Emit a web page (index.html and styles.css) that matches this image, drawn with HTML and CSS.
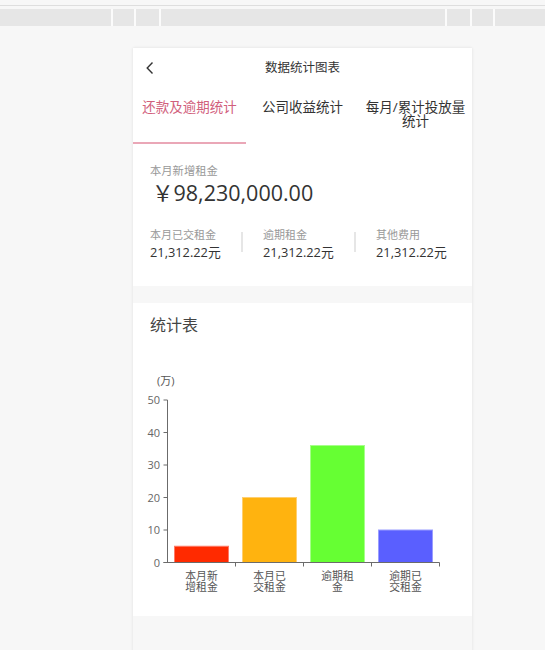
FILE: index.html
```html
<!DOCTYPE html>
<html lang="zh-CN">
<head>
<meta charset="utf-8">
<title>数据统计图表</title>
<link rel="stylesheet" href="styles.css">
</head>
<body>
<div class="topline"></div>
<div class="toolbar">
  <div class="seg s1"></div><div class="seg s2"></div><div class="seg s3"></div><div class="seg s4"></div><div class="seg s5"></div><div class="seg s6"></div><div class="seg s7"></div>
</div>
<div class="card">
  <div class="header">
    <svg class="back" width="10" height="14" viewBox="0 0 10 14"><path d="M7.5 1.5 L2.2 7 L7.5 12.5" fill="none" stroke="#333" stroke-width="1.4"/></svg>
    <div class="title">数据统计图表</div>
  </div>
  <div class="tabs">
    <div class="tab active">还款及逾期统计</div>
    <div class="tab">公司收益统计</div>
    <div class="tab">每月/累计投放量统计</div>
  </div>
  <div class="summary">
    <div class="label">本月新增租金</div>
    <div class="amount">￥98,230,000.00</div>
    <div class="stats">
      <div class="stat"><div class="label">本月已交租金</div><div class="value">21,312.22元</div></div>
      <div class="sep"></div>
      <div class="stat"><div class="label">逾期租金</div><div class="value">21,312.22元</div></div>
      <div class="sep"></div>
      <div class="stat"><div class="label">其他费用</div><div class="value">21,312.22元</div></div>
    </div>
  </div>
  <div class="gap"></div>
  <div class="chart-title">统计表</div>
  <svg class="chart" width="339" height="230" viewBox="0 0 339 230">
    <text class="unit" x="24" y="45">(万)</text>
    <g class="ylab">
      <text x="27" y="64">50</text>
      <text x="27" y="96.5">40</text>
      <text x="27" y="129">30</text>
      <text x="27" y="161.5">20</text>
      <text x="27" y="194">10</text>
      <text x="27" y="226.5">0</text>
    </g>
    <g stroke="#6b6b6b" stroke-width="1">
      <line x1="34.5" y1="60" x2="34.5" y2="222.5"/>
      <line x1="30.5" y1="60" x2="34.5" y2="60"/>
      <line x1="30.5" y1="92.5" x2="34.5" y2="92.5"/>
      <line x1="30.5" y1="125" x2="34.5" y2="125"/>
      <line x1="30.5" y1="157.5" x2="34.5" y2="157.5"/>
      <line x1="30.5" y1="190" x2="34.5" y2="190"/>
      <line x1="30.5" y1="222.5" x2="34.5" y2="222.5"/>
    </g>
    <rect x="41.5" y="206.25" width="54" height="16.25" fill="#ff2a00" stroke="#ff7a66" stroke-width="1"/>
    <rect x="109.5" y="157.5" width="54" height="65" fill="#ffb30f" stroke="#ffcf70" stroke-width="1"/>
    <rect x="177.5" y="105.5" width="54" height="117" fill="#66ff33" stroke="#a6ff8a" stroke-width="1"/>
    <rect x="245.5" y="190" width="54" height="32.5" fill="#5a5fff" stroke="#9a9dff" stroke-width="1"/>
    <g stroke="#6b6b6b" stroke-width="1">
      <line x1="30.5" y1="222.5" x2="306.5" y2="222.5"/>
      <line x1="102.5" y1="222.5" x2="102.5" y2="226.5"/>
      <line x1="170.5" y1="222.5" x2="170.5" y2="226.5"/>
      <line x1="238.5" y1="222.5" x2="238.5" y2="226.5"/>
      <line x1="306.5" y1="222.5" x2="306.5" y2="226.5"/>
    </g>
  </svg>
  <div class="xlabels">
    <div class="xlab">本月新<br>增租金</div>
    <div class="xlab">本月已<br>交租金</div>
    <div class="xlab">逾期租<br>金</div>
    <div class="xlab">逾期已<br>交租金</div>
  </div>
  <div class="bottom"></div>
</div>
</body>
</html>
```
FILE: styles.css
```css
html, body {
  margin: 0;
  padding: 0;
}
body {
  background: #f7f7f7;
  font-family: "Open Sans", "Noto Sans CJK SC", sans-serif;
  color: #333;
  height: 650px;
  overflow: hidden;
}
.topline {
  height: 1px;
  margin-top: 5px;
  background: #dedede;
}
.toolbar {
  display: flex;
  gap: 2px;
  margin-top: 3px;
  height: 17px;
  background: #fbfbfb;
}
.seg { background: #e6e6e6; height: 17px; }
.s1 { width: 111px; }
.s2 { width: 21px; }
.s3 { width: 23px; }
.s4 { width: 284px; }
.s5 { width: 23px; }
.s6 { width: 21px; }
.s7 { flex: 1; }

.card {
  width: 339px;
  margin: 22px 0 0 133px;
  background: #fff;
  box-shadow: 0 0 3px rgba(0, 0, 0, 0.10);
}
.header {
  position: relative;
  height: 40px;
  display: flex;
  align-items: center;
  justify-content: center;
}
.back {
  position: absolute;
  left: 12px;
  top: 13px;
}
.title {
  font-size: 12.5px;
  line-height: 16px;
  color: #333;
}
.tabs {
  display: flex;
  height: 56px;
}
.tab {
  width: 113px;
  box-sizing: border-box;
  padding: 12px 6px 0;
  font-size: 13.5px;
  line-height: 14px;
  text-align: center;
  color: #333;
}
.tab.active {
  color: #d1607c;
  border-bottom: 2px solid #eaa7b7;
}
.summary {
  padding: 19px 0 25px 17px;
}
.label {
  font-size: 11.3px;
  line-height: 16px;
  color: #999;
}
.amount {
  font-size: 21.5px;
  line-height: 28px;
  color: #333;
  margin-left: 2px;
}
.stats {
  display: flex;
  margin-top: 20px;
}
.stat {
  width: 91px;
}
.stat .label {
  font-size: 11px;
}
.value {
  font-size: 12.8px;
  line-height: 18px;
  color: #333;
}
.sep {
  width: 2px;
  height: 20px;
  margin: 5px 20px 0 0;
  background: #e6e6e6;
}
.gap {
  height: 17px;
  background: #f7f7f7;
}
.chart-title {
  padding: 11px 0 4px 17px;
  font-size: 16px;
  line-height: 22px;
  color: #444;
}
.chart {
  display: block;
  font-family: "Open Sans", "Noto Sans CJK SC", sans-serif;
}
.unit {
  font-size: 11px;
  fill: #555;
}
.ylab text {
  font-size: 11px;
  fill: #666;
  text-anchor: end;
}
.xlabels {
  display: flex;
  margin-left: 34.5px;
  padding-bottom: 24px;
}
.xlab {
  width: 68px;
  font-size: 10.8px;
  line-height: 11px;
  color: #555;
  text-align: center;
}
.bottom {
  height: 40px;
  background: #f7f7f7;
}
```
